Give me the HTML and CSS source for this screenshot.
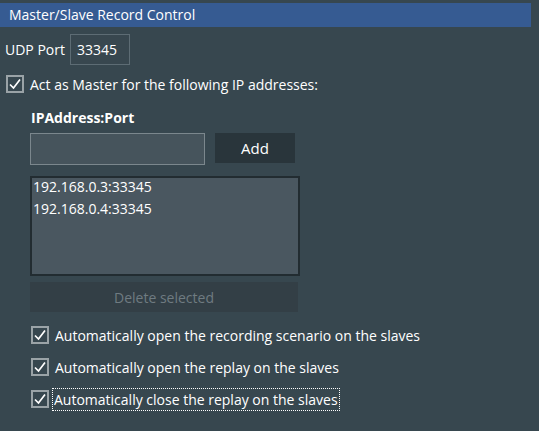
FILE: index.html
```html
<!DOCTYPE html>
<html>
<head>
<meta charset="utf-8">
<link rel="stylesheet" href="styles.css">
</head>
<body>
<div class="panel">
  <div class="header">Master/Slave Record Control</div>
  <div class="port-row">
    <span class="label">UDP Port</span>
    <div class="port-box">33345</div>
  </div>
  <div class="check-row master">
    <span class="check"><svg viewBox="0 0 18 18" width="18" height="18"><rect x="1" y="1" width="16" height="16" fill="none" stroke="#9aa3a7" stroke-width="2"/><path d="M4 9.5 L7.5 13 L14 4.5" fill="none" stroke="#ffffff" stroke-width="1.7"/></svg></span>
    <span class="text">Act as Master for the following IP addresses:</span>
  </div>
  <div class="ip-section">
    <div class="ip-label">IPAddress:Port</div>
    <div class="add-row">
      <div class="ip-input"></div>
      <div class="btn add">Add</div>
    </div>
    <div class="listbox">
      <div class="item">192.168.0.3:33345</div>
      <div class="item">192.168.0.4:33345</div>
    </div>
    <div class="btn delete">Delete selected</div>
    <div class="options">
      <div class="check-row">
        <span class="check"><svg viewBox="0 0 18 18" width="18" height="18"><rect x="1" y="1" width="16" height="16" fill="none" stroke="#9aa3a7" stroke-width="2"/><path d="M4 9.5 L7.5 13 L14 4.5" fill="none" stroke="#ffffff" stroke-width="1.7"/></svg></span>
        <span class="text">Automatically open the recording scenario on the slaves</span>
      </div>
      <div class="check-row">
        <span class="check"><svg viewBox="0 0 18 18" width="18" height="18"><rect x="1" y="1" width="16" height="16" fill="none" stroke="#9aa3a7" stroke-width="2"/><path d="M4 9.5 L7.5 13 L14 4.5" fill="none" stroke="#ffffff" stroke-width="1.7"/></svg></span>
        <span class="text">Automatically open the replay on the slaves</span>
      </div>
      <div class="check-row">
        <span class="check"><svg viewBox="0 0 18 18" width="18" height="18"><rect x="1" y="1" width="16" height="16" fill="none" stroke="#9aa3a7" stroke-width="2"/><path d="M4 9.5 L7.5 13 L14 4.5" fill="none" stroke="#ffffff" stroke-width="1.7"/></svg></span>
        <span class="text focused">Automatically close the replay on the slaves</span>
      </div>
    </div>
  </div>
</div>
</body>
</html>
```
FILE: styles.css
```css
html, body {
  margin: 0;
  padding: 0;
  background: #37474f;
}
body {
  width: 539px;
  height: 431px;
  overflow: hidden;
  font-family: "Open Sans", "Noto Sans", sans-serif;
  font-size: 14px;
  color: #ffffff;
}
.panel {
  padding-top: 3px;
  display: flex;
  flex-direction: column;
}
.header {
  width: 522px;
  height: 24px;
  background: #365b92;
  padding-left: 9px;
  line-height: 24px;
  font-size: 14px;
  color: #ffffff;
}
.port-row {
  display: flex;
  align-items: center;
  margin-top: 7px;
  padding-left: 5px;
}
.label {
  margin-right: 5px;
}
.port-box {
  box-sizing: border-box;
  width: 60px;
  height: 31px;
  border: 1px solid #5d6c74;
  background: #38474f;
  padding-left: 6px;
  line-height: 29px;
}
.check-row {
  display: flex;
  align-items: center;
  height: 32px;
}
.check-row .check {
  display: flex;
  width: 18px;
  height: 18px;
  margin-right: 6px;
}
.master {
  margin-top: 5px;
  padding-left: 6px;
  height: 28px;
}
.ip-section {
  padding-left: 30px;
  display: flex;
  flex-direction: column;
}
.ip-label {
  font-weight: bold;
  margin-top: 10px;
  height: 20px;
  line-height: 20px;
  padding-left: 1px;
}
.add-row {
  display: flex;
  margin-top: 5px;
}
.ip-input {
  box-sizing: border-box;
  width: 175px;
  height: 32px;
  border: 1px solid #7b878d;
  background: #46545c;
}
.btn {
  display: flex;
  align-items: center;
  justify-content: center;
}
.add {
  margin-left: 10px;
  width: 80px;
  height: 30px;
  background: #29353b;
  font-size: 15px;
}
.listbox {
  box-sizing: border-box;
  margin-top: 11px;
  width: 270px;
  height: 100px;
  border: 2px solid #222c31;
  background: #4a5760;
  padding: 0 0 0 1px;
}
.item {
  height: 22px;
  line-height: 18px;
}
.delete {
  margin-top: 6px;
  width: 268px;
  height: 30px;
  background: #333f46;
  color: #6f7b81;
}
.options {
  margin-top: 7px;
  display: flex;
  flex-direction: column;
}
.options .check-row {
  padding-left: 1px;
}
.focused {
  outline: 1px dotted #ffffff;
  outline-offset: 0px;
  padding: 1px 1px;
  margin-left: -2px;
}
```
